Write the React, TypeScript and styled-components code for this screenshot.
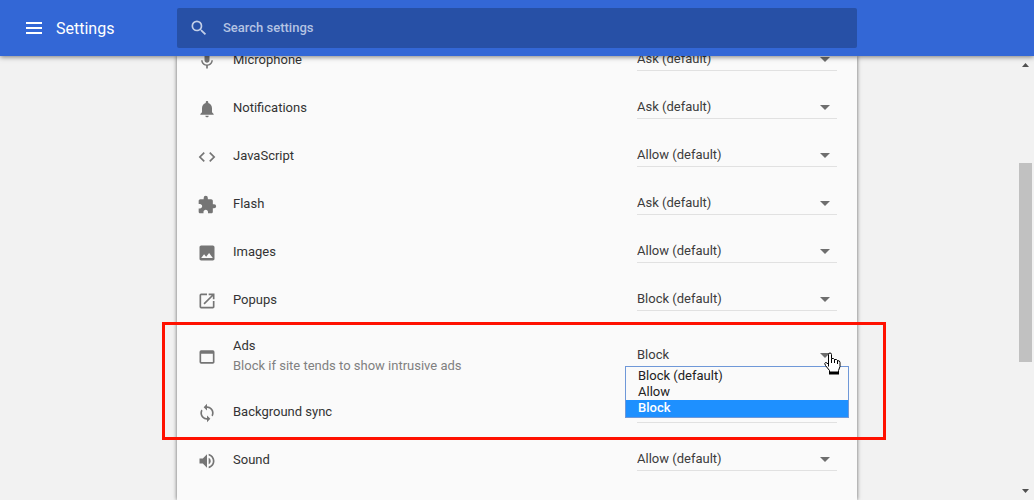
import React from "react";
import styled, { createGlobalStyle, css } from "styled-components";
import {
  MdCode,
  MdExtension,
  MdImage,
  MdMic,
  MdNotifications,
  MdOpenInNew,
  MdSearch,
  MdSync,
  MdVolumeUp,
  MdWebAsset,
} from "react-icons/md";

const GlobalStyle = createGlobalStyle`
  * { box-sizing: border-box; }
  body {
    margin: 0;
    background: #f2f2f2;
    color: #333;
    font: 13px/20px Roboto, "Liberation Sans", sans-serif;
  }
`;

const Page = styled.div`
  display: flex;
  flex-direction: column;
  height: 100vh;
  overflow: hidden;
`;

const Toolbar = styled.header`
  position: relative;
  z-index: 2;
  display: grid;
  grid-template-columns: 1fr minmax(0, 680px) 1fr;
  align-items: center;
  flex: none;
  height: 56px;
  background: #3367d6;
  box-shadow: 0 1px 5px rgba(0, 0, 0, 0.5);
`;

const Brand = styled.div`
  display: flex;
  align-items: center;
  gap: 14px;
  padding-left: 26px;
`;

const MenuButton = styled.button`
  display: flex;
  padding: 0;
  border: 0;
  background: none;
  color: #fff;
`;

const Title = styled.h1`
  margin: 0;
  color: #fff;
  font-size: 16px;
  font-weight: 400;
  line-height: 20px;
  padding-top: 2px;
`;

const SearchBox = styled.label`
  display: flex;
  align-items: center;
  gap: 14px;
  height: 40px;
  padding: 0 12px;
  border-radius: 2px;
  background: #2750a6;
  color: #c3cfe8;
`;

const SearchInput = styled.input`
  flex: 1;
  min-width: 0;
  padding: 0;
  border: 0;
  outline: 0;
  background: none;
  color: #fff;
  font: inherit;
  font-weight: 500;
  &::placeholder {
    color: #b4c3e3;
    opacity: 1;
  }
`;

const Content = styled.main`
  position: relative;
  display: flex;
  justify-content: center;
  flex: 1;
  min-height: 0;
`;

const Card = styled.section`
  flex: 0 1 680px;
  min-width: 0;
  background: #fafafa;
  box-shadow: 0 0 4px rgba(0, 0, 0, 0.6);
`;

const ScrolledList = styled.div`
  margin-top: -20px;
`;

const Highlight = styled.div`
  position: relative;
  &::after {
    content: "";
    position: absolute;
    inset: -2px -29px -4px -15px;
    border: 3px solid #ff1100;
    pointer-events: none;
  }
`;

const Row = styled.div<{ $tall?: boolean }>`
  display: flex;
  align-items: center;
  height: ${(p) => (p.$tall ? 64 : 48)}px;
  padding: 0 20px;
`;

const RowIcon = styled.span`
  display: flex;
  flex: none;
  width: 36px;
  padding-top: 2px;
  color: #757575;
`;

const RowText = styled.label`
  flex: 1;
  min-width: 0;
`;

const Hint = styled.span`
  display: block;
  color: #808080;
`;

const Field = styled.div`
  position: relative;
  flex: none;
  width: 200px;
`;

const Select = styled.select<{ $active?: boolean }>`
  display: block;
  width: 100%;
  height: 22px;
  padding: 0 0 2px;
  border: 0;
  border-bottom: 1px solid #e1e1e1;
  border-radius: 0;
  outline: 0;
  appearance: none;
  background: none;
  color: #3c3c3c;
  font: inherit;
  ${(p) =>
    p.$active &&
    css`
      border-bottom-color: #4285f4;
    `}
`;

const Caret = styled.svg`
  position: absolute;
  top: 8px;
  right: 7px;
  fill: #6e6e6e;
  pointer-events: none;
`;

const Menu = styled.ul`
  position: absolute;
  z-index: 1;
  top: 21px;
  left: -12px;
  right: -12px;
  margin: 0;
  padding: 1px 0 0;
  border: 1px solid #6f98d8;
  background: #fafafa;
  list-style: none;
`;

const MenuItem = styled.li<{ $selected?: boolean }>`
  padding: 0 12px ${(p) => (p.$selected ? 1 : 0)}px;
  line-height: 16px;
  color: ${(p) => (p.$selected ? "#fff" : "#222")};
  background: ${(p) => (p.$selected ? "#1e90ff" : "none")};
  font-weight: ${(p) => (p.$selected ? 500 : 400)};
`;

const Pointer = styled.svg`
  position: absolute;
  z-index: 2;
  top: 7px;
  left: 187px;
`;

const Scrollbar = styled.div`
  position: absolute;
  top: 0;
  right: 2px;
  bottom: 0;
  display: flex;
  flex-direction: column;
  align-items: center;
  justify-content: space-between;
  width: 13px;
  padding: 7px 0;
`;

const Thumb = styled.div`
  position: absolute;
  top: 24%;
  width: 100%;
  height: 45%;
  background: #c1c1c1;
`;

type Setting = {
  id: string;
  label: string;
  value: string;
  icon: React.ComponentType<{ size?: number }>;
  hint?: string;
  menu?: string[];
};

const before: Setting[] = [
  { id: "mic", label: "Microphone", value: "Ask (default)", icon: MdMic },
  { id: "notifications", label: "Notifications", value: "Ask (default)", icon: MdNotifications },
  { id: "js", label: "JavaScript", value: "Allow (default)", icon: MdCode },
  { id: "flash", label: "Flash", value: "Ask (default)", icon: MdExtension },
  { id: "images", label: "Images", value: "Allow (default)", icon: MdImage },
  { id: "popups", label: "Popups", value: "Block (default)", icon: MdOpenInNew },
];

const marked: Setting[] = [
  {
    id: "ads",
    label: "Ads",
    hint: "Block if site tends to show intrusive ads",
    value: "Block",
    icon: MdWebAsset,
    menu: ["Block (default)", "Allow", "Block"],
  },
  { id: "sync", label: "Background sync", value: "Allow (default)", icon: MdSync },
];

const after: Setting[] = [
  { id: "sound", label: "Sound", value: "Allow (default)", icon: MdVolumeUp },
];

function HandPointer() {
  return (
    <Pointer width="18" height="24" viewBox="0 0 18 24" aria-hidden="true">
      <path
        d="M4.500 14.500V2.500Q4.500 1 6 1T7.500 2.500V6.500Q10 6 10.500 7.500Q13 7 13.500 8.500Q16 8.500 16 10.500V14.500L14.500 18.500V21.500H5.500V18.500L1.500 13.500Q0 11 1.500 10.500Q3 10.500 4.500 12.500"
        fill="#fff"
        stroke="#000"
      />
      <path d="M7.500 6.500V11M10.500 7.500V11M13.500 8.500V12" fill="none" stroke="#000" />
      <path d="M5 19.500H15V22.500H5Z" />
    </Pointer>
  );
}

function SettingRow({ setting }: { setting: Setting }) {
  const { id, label, value, icon: Icon, hint, menu } = setting;
  return (
    <Row $tall={Boolean(hint)}>
      <RowIcon>
        <Icon size={20} />
      </RowIcon>
      <RowText htmlFor={id}>
        {label}
        {hint && <Hint>{hint}</Hint>}
      </RowText>
      <Field>
        <Select id={id} defaultValue={value} $active={Boolean(menu)}>
          <option>{value}</option>
        </Select>
        <Caret width="10" height="5" viewBox="0 0 10 5" aria-hidden="true">
          <path d="M0 0H10L5 5Z" />
        </Caret>
        {menu && (
          <>
            <Menu>
              {menu.map((item) => (
                <MenuItem key={item} $selected={item === value}>
                  {item}
                </MenuItem>
              ))}
            </Menu>
            <HandPointer />
          </>
        )}
      </Field>
    </Row>
  );
}

export default function App() {
  return (
    <Page>
      <GlobalStyle />
      <Toolbar>
        <Brand>
          <MenuButton aria-label="Main menu">
            <svg width="16" height="12" viewBox="0 0 16 12" fill="currentColor">
              <path d="M0 0H16V2H0ZM0 5H16V7H0ZM0 10H16V12H0Z" />
            </svg>
          </MenuButton>
          <Title>Settings</Title>
        </Brand>
        <SearchBox>
          <MdSearch size={20} />
          <SearchInput type="search" placeholder="Search settings" aria-label="Search settings" />
        </SearchBox>
      </Toolbar>
      <Content>
        <Card>
          <ScrolledList>
            {before.map((s) => (
              <SettingRow key={s.id} setting={s} />
            ))}
            <Highlight>
              {marked.map((s) => (
                <SettingRow key={s.id} setting={s} />
              ))}
            </Highlight>
            {after.map((s) => (
              <SettingRow key={s.id} setting={s} />
            ))}
          </ScrolledList>
        </Card>
        <Scrollbar aria-hidden="true">
          <svg width="7" height="4" viewBox="0 0 7 4" fill="#505050">
            <path d="M0 4L3.500 0L7 4Z" />
          </svg>
          <Thumb />
          <svg width="7" height="4" viewBox="0 0 7 4" fill="#505050">
            <path d="M0 0L3.500 4L7 0Z" />
          </svg>
        </Scrollbar>
      </Content>
    </Page>
  );
}
